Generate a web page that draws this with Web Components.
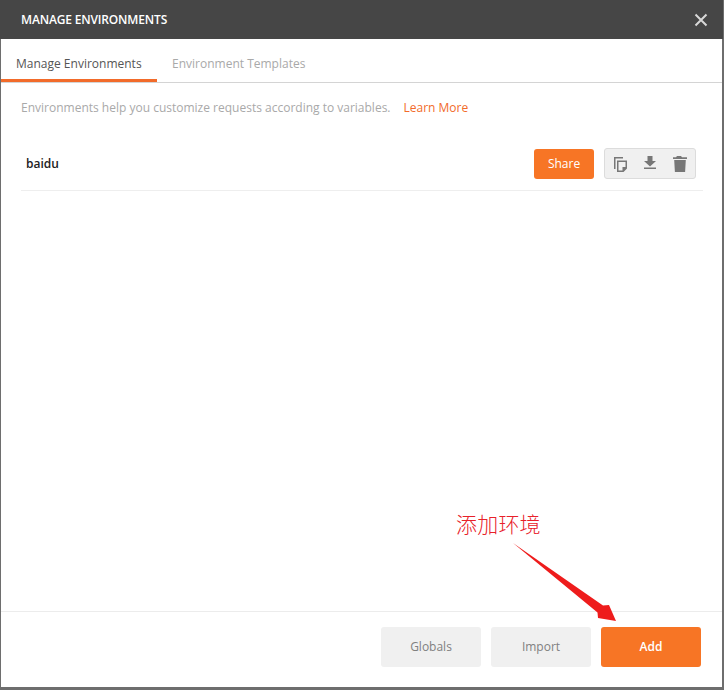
<!DOCTYPE html>
<html><head><meta charset="utf-8">
<style>
html,body{margin:0;padding:0;background:#6e6e6e}
body{width:724px;height:690px;overflow:hidden;font-family:"Open Sans",sans-serif}
</style></head><body>
<env-modal>
  <env-tabs slot="tabs"></env-tabs>
  <env-row slot="list" name="baidu"></env-row>
  <ui-btn slot="footer" kind="grey">Globals</ui-btn>
  <ui-btn slot="footer" kind="grey">Import</ui-btn>
  <ui-btn slot="footer" kind="orange" strong>Add</ui-btn>
</env-modal>
<script>
function def(name,html,init){
  customElements.define(name,class extends HTMLElement{
    connectedCallback(){
      if(!this.shadowRoot){this.attachShadow({mode:'open'}).innerHTML=html;if(init)init(this)}
    }
  });
}
def('ui-btn',`<style>
:host{display:flex;align-items:center;justify-content:center;width:100px;height:40px;border-radius:3px;font-size:12px;box-sizing:border-box;padding-bottom:1px}
:host([kind=grey]){background:#f0f0f0;color:#808080}
:host([kind=orange]){background:#f77525;color:#fff}
:host([strong]){font-weight:600}
:host([small]){width:60px;height:30px;font-weight:500}
</style><slot></slot>`);
def('env-tabs',`<style>
:host{display:flex;height:44px;box-sizing:border-box;border-bottom:1px solid #d4d4d4;font-size:12px;color:#a9a9a9;white-space:nowrap}
.t{box-sizing:border-box;height:43px;padding:5px 15px 0 15px;display:flex;align-items:center}
.a{color:#555;border-bottom:3px solid #f26b2a;width:156px;padding-top:8px;padding-right:0}
</style><div class="t a">Manage Environments</div><div class="t">Environment Templates</div>`);
def('env-row',`<style>
:host{display:flex;align-items:center;height:54px;margin:0 19px 0 20px;border-bottom:1px solid #eeeeee;box-sizing:border-box;padding-left:5px;padding-right:7px;font-size:12px;font-weight:600;color:#222}
.n{flex:1}
.g{display:flex;align-items:center;box-sizing:border-box;margin-left:10px;width:92px;height:31px;background:#f0f0f0;border:1px solid #dcdcdc;border-radius:3px;padding-left:7px;gap:11px}
svg{display:block;fill:#777}
</style><span class="n"></span><ui-btn small kind="orange">Share</ui-btn>
<div class="g">
<svg width="18" height="18" viewBox="0 0 18 18"><path d="M2 2h9v1.500H3.500V14H2z"/><path fill-rule="evenodd" d="M5 5.500h10v8L11.500 17H5zM6.500 7v8.500h4v-3.500h3V7z"/></svg>
<svg width="18" height="18" viewBox="0 0 18 18"><path d="M6.500 1h5v5h3.500L9 11.500 3 6h3.500zM3 12.500h12V14H3z"/></svg>
<svg width="18" height="18" viewBox="0 0 18 18"><path d="M7 1h4l1 1.300h5v1.700H3V2.300h3zM4.200 5h11.600l-.7 12H4.900z"/></svg>
</div>`,el=>{el.shadowRoot.querySelector('.n').textContent=el.getAttribute('name')});
def('env-modal',`<style>
:host{display:flex;flex-direction:column;width:721px;height:687px;margin-left:1px;background:#fff;position:relative;box-sizing:border-box}
header{flex:none;height:39px;background:#464646;display:flex;align-items:center;justify-content:space-between;padding:0 15px 0 21px;color:#fff;font-size:12px;font-weight:600;letter-spacing:-.16px;margin:0 -1px}
header svg{display:block}
.intro{flex:none;padding:16px 0 0 20px;height:25px;font-size:12px;color:#a9a9a9;display:flex;gap:13px;line-height:17px}
.intro a{color:#f26b2a;font-weight:500}
.list{flex:1;padding-top:13px}
footer{flex:none;height:76px;box-sizing:border-box;border-top:1px solid #ececec;padding:15px 21px 0 0;display:flex;justify-content:flex-end;gap:10px}
.note{position:absolute;left:455px;top:508px;font:300 21px/30px "Noto Sans CJK SC",sans-serif;color:#e8212a;white-space:nowrap;letter-spacing:.2px}
.arrow{position:absolute;left:-1px;top:0;pointer-events:none}
</style>
<header><span>MANAGE ENVIRONMENTS</span>
<svg width="14" height="14" viewBox="0 0 14 14"><path d="M1.500 1.500l11 11M12.500 1.500l-11 11" stroke="#d8d8d8" stroke-width="2"/></svg></header>
<slot name="tabs"></slot>
<div class="intro"><span>Environments help you customize requests according to variables.</span><a>Learn More</a></div>
<div class="list"><slot name="list"></slot></div>
<footer><slot name="footer"></slot></footer>
<div class="note">添加环境</div>
<svg class="arrow" width="722" height="690"><path d="M513 543L603 605.500 609 605 616 621 598 618 597.500 612.500Z" fill="#ee1c1c"/></svg>`);
</script>
</body></html>
